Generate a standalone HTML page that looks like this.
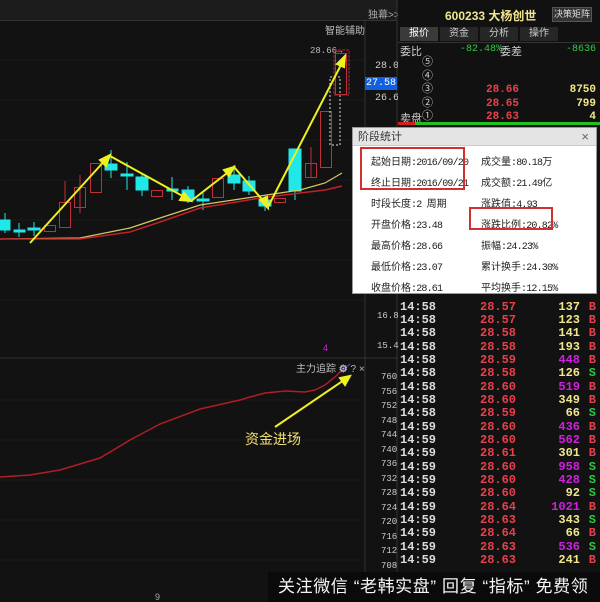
<!DOCTYPE html>
<html><head><meta charset="utf-8">
<style>
*{margin:0;padding:0;box-sizing:border-box}
body{width:600px;height:602px;background:#121212;position:relative;overflow:hidden;font-family:"Liberation Sans","Noto Sans CJK SC",sans-serif;color:#ccc}
.a{position:absolute;white-space:nowrap}
.m{font-family:"Liberation Mono","Noto Sans CJK SC",monospace}
.r{color:#e8404a}.g{color:#2ecc40}.y{color:#f0e68c}.p{color:#d020e0}
.row{position:absolute;left:398px;width:202px;height:13px;font-size:12px;font-weight:bold;line-height:13px}
.row span{position:absolute}
.dl{position:absolute;font-size:10px;color:#222;font-family:"Liberation Sans","Noto Sans CJK SC",sans-serif}
.dl i{font-style:normal;font-family:"Liberation Mono",monospace;letter-spacing:-0.8px}
</style></head><body>
<div class="a" style="left:0;top:0;width:397px;height:21px;background:#1c1c1c;border-bottom:1px solid #333"></div>
<div class="a" style="left:368px;top:6px;font-size:10px;color:#aaa">独幕&gt;&gt;</div>
<div class="a" style="left:325px;top:22px;font-size:10px;color:#bbb">智能辅助</div>
<div class="a m" style="left:310px;top:46px;font-size:9px;color:#bbb">28.66→</div>
<svg class="a" style="left:0;top:0" width="398" height="602">
<g stroke="#1b1b1b" stroke-width="1">
<line x1="0" y1="60" x2="365" y2="60"/><line x1="0" y1="100" x2="365" y2="100"/><line x1="0" y1="140" x2="365" y2="140"/><line x1="0" y1="180" x2="365" y2="180"/><line x1="0" y1="220" x2="365" y2="220"/><line x1="0" y1="260" x2="365" y2="260"/><line x1="0" y1="300" x2="365" y2="300"/>
<line x1="0" y1="400" x2="365" y2="400"/><line x1="0" y1="440" x2="365" y2="440"/><line x1="0" y1="480" x2="365" y2="480"/><line x1="0" y1="520" x2="365" y2="520"/><line x1="0" y1="560" x2="365" y2="560"/>
</g>
<line x1="0" y1="358" x2="398" y2="358" stroke="#333"/>
<line x1="365" y1="21" x2="365" y2="602" stroke="#333"/>
<line x1="397" y1="0" x2="397" y2="602" stroke="#333"/>
<g fill="#20e8e8" stroke="#20e8e8">
<line x1="5" y1="213" x2="5" y2="233"/><rect x="0" y="220" width="10" height="10"/>
<line x1="19" y1="223" x2="19" y2="237"/><rect x="14" y="230" width="11" height="2"/>
<line x1="34" y1="222" x2="34" y2="236"/><rect x="28" y="228" width="12" height="2"/>
<line x1="111" y1="150" x2="111" y2="178"/><rect x="105" y="164" width="12" height="6"/>
<line x1="127" y1="162" x2="127" y2="190"/><rect x="121" y="174" width="12" height="2"/>
<line x1="142" y1="174" x2="142" y2="196"/><rect x="136" y="177" width="12" height="13"/>
<line x1="172" y1="177" x2="172" y2="200"/><rect x="167" y="189" width="11" height="2"/>
<line x1="188" y1="186" x2="188" y2="203"/><rect x="182" y="190" width="12" height="10"/>
<line x1="203" y1="193" x2="203" y2="210"/><rect x="197" y="199" width="12" height="2"/>
<line x1="234" y1="165" x2="234" y2="190"/><rect x="228" y="175" width="12" height="8"/>
<line x1="249" y1="176" x2="249" y2="195"/><rect x="243" y="181" width="12" height="10"/>
<line x1="265" y1="196" x2="265" y2="211"/><rect x="259" y="200" width="12" height="6"/>
<line x1="295" y1="149" x2="295" y2="200"/><rect x="289" y="149" width="12" height="42"/>
</g>
<g fill="none" stroke="#c0303c">
<rect x="44.5" y="225.5" width="11" height="6"/>
<line x1="65" y1="181" x2="65" y2="202"/><rect x="59.5" y="202.5" width="11" height="25"/>
<line x1="80" y1="175" x2="80" y2="213"/><rect x="74.5" y="187.5" width="11" height="20"/>
<rect x="90.5" y="163.5" width="11" height="29"/>
<rect x="151.5" y="190.5" width="11" height="6"/>
<rect x="212.5" y="178.5" width="11" height="19"/>
<rect x="274.5" y="198.5" width="11" height="4"/>
<line x1="311" y1="147" x2="311" y2="177"/><rect x="305.5" y="163.5" width="11" height="14"/>
<rect x="320.5" y="111.5" width="11" height="56"/>
<rect x="335.5" y="53.5" width="11" height="41"/>
</g>
<rect x="330" y="77" width="10" height="68" fill="none" stroke="#ddd" stroke-dasharray="2,2"/>
<rect x="334" y="50" width="15" height="45" fill="none" stroke="#c02030" stroke-dasharray="3,1"/>
<polyline fill="none" stroke="#d8c860" stroke-width="1.2" points="0,239 80,238 130,228 160,218 200,205 260,196 300,190 325,183 342,173"/>
<polyline fill="none" stroke="#c0202a" stroke-width="1.5" points="0,239 80,239 130,232 160,222 200,208 260,198 300,193 325,190 342,186"/>
<g stroke="#f0f020" stroke-width="2" fill="#f0f020">
<line x1="30" y1="243" x2="108" y2="157"/><polygon points="110,155 100,160 106,166" />
<line x1="110" y1="156" x2="188" y2="199"/><polygon points="191,201 180,200 184,193"/>
<line x1="191" y1="201" x2="231" y2="170"/><polygon points="234,167 224,170 229,176"/>
<line x1="234" y1="167" x2="266" y2="204"/><polygon points="268,208 260,200 267,197"/>
<line x1="268" y1="207" x2="343" y2="61"/><polygon points="345,56 337,64 344,67"/>
<line x1="275" y1="427" x2="347" y2="378"/><polygon points="350,376 340,378 345,385"/>
</g>
<polyline fill="none" stroke="#b01c28" stroke-width="1.5" points="0,477 30,475 60,470 100,458 130,440 160,424 200,409 240,400 250,397 265,393 285,391 305,392 315,390 325,385 335,377 342,370"/>
<polyline fill="none" stroke="#6030c0" stroke-width="1.2" points="340,372 350,364"/>
</svg>
<div class="a" style="left:323px;top:343px;font-size:9px;color:#d020e0">4</div>
<div class="a" style="left:296px;top:360px;font-size:10px;color:#bbb">主力追踪 <b>⚙</b> ? ×</div>
<div class="a" style="left:245px;top:429px;font-size:14px;color:#f0e070">资金进场</div>
<div class="a" style="left:155px;top:592px;font-size:9px;color:#aaa">9</div>
<div class="a m" style="left:375px;top:61px;font-size:10px;color:#ccc">28.0</div>
<div class="a m" style="left:365px;top:77px;width:32px;height:13px;background:#1060e0;font-size:10px;color:#fff;text-align:center;line-height:13px">27.58</div>
<div class="a m" style="left:375px;top:93px;font-size:10px;color:#ccc">26.6</div>
<div class="a m" style="left:377px;top:311px;font-size:9px;color:#ccc">16.8</div>
<div class="a m" style="left:377px;top:341px;font-size:9px;color:#ccc">15.4</div>
<div class="a m" style="left:381px;top:370px;font-size:9px;line-height:14.5px;color:#ccc">760<br>756<br>752<br>748<br>744<br>740<br>736<br>732<br>728<br>724<br>720<br>716<br>712<br>708</div>
<div class="a" style="left:398px;top:0;width:202px;height:125px;background:#111"></div>
<div class="a" style="left:445px;top:7px;font-size:12px;font-weight:bold;color:#f0e68c">600233 大杨创世</div>
<div class="a" style="left:552px;top:7px;width:40px;height:15px;background:#333;border:1px solid #555;font-size:9px;color:#ddd;text-align:center;line-height:13px">决策矩阵</div>
<div class="a" style="left:400px;top:27px;width:188px;height:14px;font-size:10px;color:#ccc">
<span class="a" style="left:0;width:38px;height:14px;background:#3a3a3a;text-align:center;line-height:14px;color:#fff">报价</span>
<span class="a" style="left:40px;width:38px;height:14px;background:#262626;text-align:center;line-height:14px">资金</span>
<span class="a" style="left:80px;width:38px;height:14px;background:#262626;text-align:center;line-height:14px">分析</span>
<span class="a" style="left:120px;width:38px;height:14px;background:#262626;text-align:center;line-height:14px">操作</span></div>
<div class="a" style="left:398px;top:42px;width:202px;height:1px;background:#333"></div>
<div class="a" style="left:400px;top:43px;font-size:11px;color:#ccc">委比</div>
<div class="a m g" style="left:460px;top:44px;font-size:10px">-82.48%</div>
<div class="a" style="left:500px;top:43px;font-size:11px;color:#ccc">委差</div>
<div class="a m g" style="left:566px;top:44px;font-size:10px">-8636</div>
<div class="a" style="left:422px;top:56px;font-size:11px;line-height:13.5px;color:#ccc">⑤<br>④<br>③<br>②<br>①</div>
<div class="a" style="left:400px;top:110px;font-size:11px;color:#ccc">卖盘</div>
<div class="a m r" style="left:486px;top:84px;font-size:11px;font-weight:bold;line-height:13.5px">28.66<br>28.65<br>28.63</div>
<div class="a m y" style="left:560px;top:84px;width:36px;text-align:right;font-size:11px;font-weight:bold;line-height:13.5px">8750<br>799<br>4</div>
<div class="a" style="left:398px;top:122px;width:17px;height:3px;background:#d02020"></div>
<div class="a" style="left:415px;top:122px;width:185px;height:3px;background:#20c020"></div>
<div class="row m" style="top:301px"><span style="left:2px;color:#ddd">14:58</span><span class="r" style="left:82px">28.57</span><span class="y" style="right:20px">137</span><span class="r" style="right:4px">B</span></div>
<div class="row m" style="top:314px"><span style="left:2px;color:#ddd">14:58</span><span class="r" style="left:82px">28.57</span><span class="y" style="right:20px">123</span><span class="r" style="right:4px">B</span></div>
<div class="row m" style="top:327px"><span style="left:2px;color:#ddd">14:58</span><span class="r" style="left:82px">28.58</span><span class="y" style="right:20px">141</span><span class="r" style="right:4px">B</span></div>
<div class="row m" style="top:341px"><span style="left:2px;color:#ddd">14:58</span><span class="r" style="left:82px">28.58</span><span class="y" style="right:20px">193</span><span class="r" style="right:4px">B</span></div>
<div class="row m" style="top:354px"><span style="left:2px;color:#ddd">14:58</span><span class="r" style="left:82px">28.59</span><span class="p" style="right:20px">448</span><span class="r" style="right:4px">B</span></div>
<div class="row m" style="top:367px"><span style="left:2px;color:#ddd">14:58</span><span class="r" style="left:82px">28.58</span><span class="y" style="right:20px">126</span><span class="g" style="right:4px">S</span></div>
<div class="row m" style="top:381px"><span style="left:2px;color:#ddd">14:58</span><span class="r" style="left:82px">28.60</span><span class="p" style="right:20px">519</span><span class="r" style="right:4px">B</span></div>
<div class="row m" style="top:394px"><span style="left:2px;color:#ddd">14:58</span><span class="r" style="left:82px">28.60</span><span class="y" style="right:20px">349</span><span class="r" style="right:4px">B</span></div>
<div class="row m" style="top:407px"><span style="left:2px;color:#ddd">14:58</span><span class="r" style="left:82px">28.59</span><span class="y" style="right:20px">66</span><span class="g" style="right:4px">S</span></div>
<div class="row m" style="top:421px"><span style="left:2px;color:#ddd">14:59</span><span class="r" style="left:82px">28.60</span><span class="p" style="right:20px">436</span><span class="r" style="right:4px">B</span></div>
<div class="row m" style="top:434px"><span style="left:2px;color:#ddd">14:59</span><span class="r" style="left:82px">28.60</span><span class="p" style="right:20px">562</span><span class="r" style="right:4px">B</span></div>
<div class="row m" style="top:447px"><span style="left:2px;color:#ddd">14:59</span><span class="r" style="left:82px">28.61</span><span class="y" style="right:20px">301</span><span class="r" style="right:4px">B</span></div>
<div class="row m" style="top:461px"><span style="left:2px;color:#ddd">14:59</span><span class="r" style="left:82px">28.60</span><span class="p" style="right:20px">958</span><span class="g" style="right:4px">S</span></div>
<div class="row m" style="top:474px"><span style="left:2px;color:#ddd">14:59</span><span class="r" style="left:82px">28.60</span><span class="p" style="right:20px">428</span><span class="g" style="right:4px">S</span></div>
<div class="row m" style="top:487px"><span style="left:2px;color:#ddd">14:59</span><span class="r" style="left:82px">28.60</span><span class="y" style="right:20px">92</span><span class="g" style="right:4px">S</span></div>
<div class="row m" style="top:501px"><span style="left:2px;color:#ddd">14:59</span><span class="r" style="left:82px">28.64</span><span class="p" style="right:20px">1021</span><span class="r" style="right:4px">B</span></div>
<div class="row m" style="top:514px"><span style="left:2px;color:#ddd">14:59</span><span class="r" style="left:82px">28.63</span><span class="y" style="right:20px">343</span><span class="g" style="right:4px">S</span></div>
<div class="row m" style="top:527px"><span style="left:2px;color:#ddd">14:59</span><span class="r" style="left:82px">28.64</span><span class="y" style="right:20px">66</span><span class="r" style="right:4px">B</span></div>
<div class="row m" style="top:541px"><span style="left:2px;color:#ddd">14:59</span><span class="r" style="left:82px">28.63</span><span class="p" style="right:20px">536</span><span class="g" style="right:4px">S</span></div>
<div class="row m" style="top:554px"><span style="left:2px;color:#ddd">14:59</span><span class="r" style="left:82px">28.63</span><span class="y" style="right:20px">241</span><span class="r" style="right:4px">B</span></div>
<div class="a" style="left:352px;top:127px;width:245px;height:167px;background:#fff;border:1px solid #999">
<div style="height:18px;background:#e4e4e4;border-bottom:1px solid #ccc;font-size:11px;color:#333;padding-left:5px;line-height:18px;position:relative">阶段统计<span style="position:absolute;right:7px;top:0;font-size:13px;color:#666">×</span></div>
</div>
<div class="dl" style="left:371px;top:153px;line-height:20px">起始日期<i>:2016/09/20</i><br>终止日期<i>:2016/09/21</i><br>时段长度<i>:2 </i>周期<br>开盘价格<i>:23.48</i><br>最高价格<i>:28.66</i><br>最低价格<i>:23.07</i><br>收盘价格<i>:28.61</i></div>
<div class="dl" style="left:481px;top:153px;line-height:20px">成交量<i>:80.18</i>万<br>成交额<i>:21.49</i>亿<br>涨跌值<i>:4.93</i><br>涨跌比例<i>:20.82%</i><br>振幅<i>:24.23%</i><br>累计换手<i>:24.30%</i><br>平均换手<i>:12.15%</i></div>
<div class="a" style="left:360px;top:147px;width:105px;height:43px;border:2px solid #d03030"></div>
<div class="a" style="left:469px;top:207px;width:84px;height:23px;border:2px solid #d03030"></div>
<div class="a" style="left:268px;top:572px;width:332px;height:30px;background:#0a0a0a;color:#f4f4f4;font-size:17px;line-height:30px;padding-left:10px;letter-spacing:0.6px">关注微信 “老韩实盘” 回复 “指标” 免费领</div>
</body></html>
